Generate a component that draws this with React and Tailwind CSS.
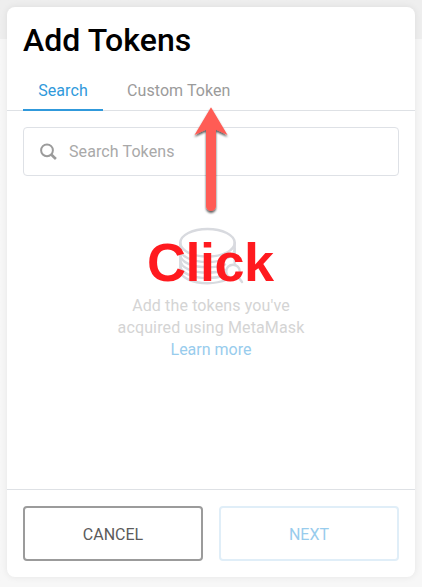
function SearchIcon() {
  return (
    <svg width="18" height="18" viewBox="0 0 18 18" fill="none" stroke="#9b9b9b" strokeLinecap="butt">
      <circle cx="7" cy="7.3" r="5.9" strokeWidth="2" />
      <path d="M11.2 11.5 L15.900 16" strokeWidth="2.6" />
    </svg>
  );
}

function CoinsIcon() {
  return (
    <svg width="66" height="60" viewBox="0 0 66 60" fill="none" stroke="#d8dadf" strokeWidth="2.4" strokeLinecap="round">
      <ellipse cx="28.500" cy="15.800" rx="27.2" ry="13.800" />
      <path d="M1.3 15.800 V43 C1.3 50.500 13 56.200 28.500 56.200 C35 56.200 42 55 48 52.500" />
      <path d="M55.700 15.800 V36" />
      <path d="M1.3 22 C1.3 30 14 35 28.500 35 S55.700 30 55.700 22" />
      <path d="M1.3 27.500 C1.3 35.500 14 40.300 28.500 40.300 C35 40.300 41 39.500 46 37.500" />
      <path d="M1.3 33 C1.3 41 14 45.600 28.500 45.600 C35 45.600 41 44.800 46 43" />
      <path d="M1.3 38.500 C1.3 46 14 51 28.500 51 C35 51 41 50 46 48.500" />
      <circle cx="54" cy="44.500" r="6.800" />
      <path d="M59.200 49.800 L63 55" />
    </svg>
  );
}

function Annotation() {
  return (
    <>
      <svg className="pointer-events-none absolute left-[184px] top-[98px]" width="56" height="124" viewBox="0 0 56 124">
        <defs>
          <filter id="shadow" x="-30%" y="-20%" width="160%" height="140%">
            <feDropShadow dx="0" dy="2" stdDeviation="0.8" floodColor="#000" floodOpacity="0.65" />
          </filter>
        </defs>
        <path
          d="M27 9.200 L43.500 37 L32 31.800 V108 A5 5 0 0 1 22 108 V31.800 L10.500 37 Z"
          fill="#ff5c54"
          filter="url(#shadow)"
        />
      </svg>
      <div className="pointer-events-none absolute left-[147px] top-[232px] font-['Liberation_Sans',Arial,sans-serif] text-[54px] leading-[60px] font-bold tracking-[-0.5px] text-[#ff1a1f]">
        Click
      </div>
    </>
  );
}

export default function App() {
  return (
    <div className="relative h-[587px] w-[422px] bg-linear-to-b from-[#eeeeee] from-[39px] to-[#f7f7f7] to-[39px] p-[7px] font-[Roboto,sans-serif]">
      <div className="flex h-[570px] w-[408px] flex-col rounded-lg bg-white shadow-[0_0_7px_0_rgba(0,0,0,0.08)]">
        <header className="flex h-[104px] flex-col justify-between border-b border-[#dee1e5] px-4 pt-3">
          <h1 className="text-[32px] leading-[43px] font-medium tracking-[0.06px] text-black">Add Tokens</h1>
          <nav className="-mb-px flex text-base leading-[22px]">
            <button className="h-[32px] w-20 border-b-2 border-[#3099db] pb-1.5 tracking-[0.08px] text-[#3099db]">Search</button>
            <button className="h-[32px] border-b-2 border-transparent px-6 pb-1.5 tracking-[0.08px] text-[#9b9b9b]">Custom Token</button>
          </nav>
        </header>
        <main className="flex flex-1 flex-col items-center px-4 pt-4">
          <div className="flex h-[49px] w-full items-center gap-[11px] rounded border border-[#dee1e6] pl-4">
            <SearchIcon />
            <span className="pt-px text-base tracking-[0.1px] text-[#a9a9a9]">Search Tokens</span>
          </div>
          <div className="mt-[51px] pl-[2px]">
            <CoinsIcon />
          </div>
          <p className="mt-2 text-center text-base leading-[22px] tracking-[0.13px] text-[#d4d4d4]">
            Add the tokens you've
            <br />
            acquired using MetaMask
            <br />
            <a className="tracking-normal text-[#98cced]">Learn more</a>
          </p>
        </main>
        <footer className="flex h-[88px] gap-4 border-t border-[#dee1e5] px-4 pt-4">
          <button className="h-[55px] flex-1 rounded border-2 border-[#9b9b9b] pt-0.5 text-base text-[#5b5b5b]">CANCEL</button>
          <button className="h-[55px] flex-1 rounded border-2 border-[#e0eef8] pt-0.5 text-base text-[#98cced]">NEXT</button>
        </footer>
      </div>
      <Annotation />
    </div>
  );
}
